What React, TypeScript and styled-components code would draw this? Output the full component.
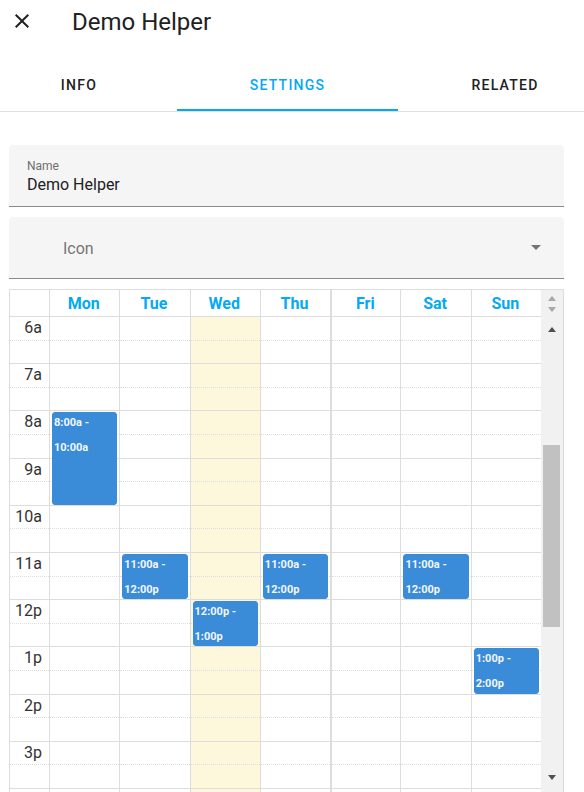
import React from 'react';
import styled, { createGlobalStyle } from 'styled-components';

const GlobalStyle = createGlobalStyle`
  body {
    margin: 0;
    font-family: Roboto, 'Noto Sans', sans-serif;
    background: #fff;
    overflow: hidden;
  }
`;

const SLOT = 23.6;
const HOUR = SLOT * 2;

const Page = styled.div`
  width: 584px;
  height: 792px;
  overflow: hidden;
`;

const Header = styled.div`
  height: 44px;
  display: flex;
  align-items: center;
  padding-left: 10px;
  gap: 38px;

  h2 {
    margin: 0;
    font-size: 24px;
    font-weight: 400;
    color: #212121;
    line-height: 1;
  }
`;

const CloseButton = styled.button`
  width: 24px;
  height: 24px;
  padding: 0;
  border: none;
  background: none;
  display: flex;
  margin-top: -2px;
  color: #212121;
`;

const TabBar = styled.div`
  margin-top: 16px;
  display: flex;
  overflow: hidden;
  border-bottom: 1px solid #e0e0e0;
`;

const Tab = styled.div<{ $width: number; $active?: boolean; $shift?: number }>`
  flex: 0 0 ${(p) => p.$width}px;
  height: 51px;
  box-sizing: border-box;
  padding: 0 ${(p) => p.$shift ?? 0}px 0 0;
  display: flex;
  align-items: center;
  justify-content: center;
  font-size: 14px;
  font-weight: 500;
  letter-spacing: 1.25px;
  text-transform: uppercase;
  color: ${(p) => (p.$active ? '#03a9f4' : '#212121')};
  border-bottom: 2px solid ${(p) => (p.$active ? '#03a9f4' : 'transparent')};
`;

const Content = styled.div`
  padding: 33px 20px 0 9px;
  display: flex;
  flex-direction: column;
  gap: 10px;
`;

const Field = styled.div`
  height: 62px;
  box-sizing: border-box;
  background: #f5f5f5;
  border-radius: 4px 4px 0 0;
  border-bottom: 1px solid #8a8a8a;
  display: flex;
  flex-direction: column;
  justify-content: center;
  padding: 0 18px;
`;

const FieldLabel = styled.span`
  font-size: 12px;
  color: #6f6f6f;
  line-height: 14px;
  margin-top: 2px;
`;

const FieldValue = styled.span`
  font-size: 16px;
  color: #212121;
  line-height: 20px;
  margin-top: 2px;
`;

const SelectField = styled(Field)`
  flex-direction: row;
  align-items: center;
  justify-content: space-between;
  padding: 0 23px 0 54px;
`;

const Placeholder = styled.span`
  font-size: 16px;
  color: #757575;
  margin-top: 1px;
`;

const Caret = styled.span`
  width: 0;
  height: 0;
  border-left: 5px solid transparent;
  border-right: 5px solid transparent;
  border-top: 5px solid #757575;
`;

const Calendar = styled.div`
  border: 1px solid #ddd;
  border-bottom: none;
  height: 503px;
  display: flex;
  flex-direction: column;
`;

const Columns = `
  display: grid;
  grid-template-columns: 39px repeat(7, 1fr) 22px;
`;

const HeadRow = styled.div`
  ${Columns};
  height: 27px;
`;

const HeadCell = styled.div<{ $thick?: boolean }>`
  border-left: ${(p) => (p.$thick ? 2 : 1)}px solid #ddd;
  border-bottom: 1px solid #ddd;
  display: flex;
  align-items: center;
  justify-content: center;
  padding-right: 2px;
  font-size: 16px;
  font-weight: 700;
  color: #03a9f4;
`;

const AxisHead = styled.div`
  border-bottom: 1px solid #ddd;
`;

const Body = styled.div`
  ${Columns};
  flex: 1;
  overflow: hidden;
`;

const Column = styled.div<{ $thick?: boolean; $today?: boolean }>`
  position: relative;
  border-left: ${(p) => (p.$thick ? 2 : 1)}px solid #ddd;
  background: ${(p) => (p.$today ? '#fdf8dc' : 'transparent')};
`;

const AxisColumn = styled.div`
  position: relative;
`;

const Slot = styled.div<{ $minor: boolean }>`
  height: ${SLOT}px;
  box-sizing: border-box;
  border-bottom: 1px ${(p) => (p.$minor ? 'dotted' : 'solid')} #ddd;
`;

const TimeLabel = styled.div`
  height: ${SLOT}px;
  box-sizing: border-box;
  border-bottom: 1px dotted #ddd;
  text-align: right;
  padding: 1px 7px 0 0;
  font-size: 16px;
  line-height: 19px;
  color: #333;
`;

const Event = styled.div`
  position: absolute;
  left: 2px;
  right: 2px;
  background: #3a8bd8;
  border: 1px solid #3a8bd8;
  border-radius: 3px;
  box-sizing: border-box;
  padding: 0 1px;
  overflow: hidden;
  color: #f3f7fd;
  font-size: 11px;
  font-weight: 700;
  line-height: 25px;

  span {
    display: block;
    margin-top: -3px;
  }
`;

const ScrollTrack = styled.div<{ $head?: boolean }>`
  background: #f1f1f1;
  display: flex;
  flex-direction: column;
  align-items: center;
  ${(p) => (p.$head ? 'justify-content: center; gap: 6px;' : '')}
`;

const Arrow = styled.span<{ $up?: boolean; $color: string; $gap?: number }>`
  width: 0;
  height: 0;
  margin-top: ${(p) => p.$gap ?? 0}px;
  border-left: 4px solid transparent;
  border-right: 4px solid transparent;
  ${(p) =>
    p.$up
      ? `border-bottom: 5px solid ${p.$color};`
      : `border-top: 5px solid ${p.$color};`}
`;

const Thumb = styled.div`
  width: 17px;
  height: 182px;
  margin-top: 113px;
  background: #c1c1c1;
`;

const DAYS = ['Mon', 'Tue', 'Wed', 'Thu', 'Fri', 'Sat', 'Sun'];
const HOURS = ['6a', '7a', '8a', '9a', '10a', '11a', '12p', '1p', '2p', '3p'];

type CalEvent = { day: number; start: number; end: number; from: string; to: string };

const EVENTS: CalEvent[] = [
  { day: 0, start: 8, end: 10, from: '8:00a', to: '10:00a' },
  { day: 1, start: 11, end: 12, from: '11:00a', to: '12:00p' },
  { day: 2, start: 12, end: 13, from: '12:00p', to: '1:00p' },
  { day: 3, start: 11, end: 12, from: '11:00a', to: '12:00p' },
  { day: 5, start: 11, end: 12, from: '11:00a', to: '12:00p' },
  { day: 6, start: 13, end: 14, from: '1:00p', to: '2:00p' },
];

function Slots() {
  return (
    <>
      {HOURS.map((h) => (
        <React.Fragment key={h}>
          <Slot $minor />
          <Slot $minor={false} />
        </React.Fragment>
      ))}
    </>
  );
}

export default function App() {
  return (
    <Page>
      <GlobalStyle />
      <Header>
        <CloseButton aria-label="Close">
          <svg width="24" height="24" viewBox="0 0 24 24">
            <path
              fill="currentColor"
              d="M19 6.41L17.59 5 12 10.59 6.41 5 5 6.41 10.59 12 5 17.59 6.41 19 12 13.41 17.59 19 19 17.59 13.41 12z"
            />
          </svg>
        </CloseButton>
        <h2>Demo Helper</h2>
      </Header>

      <TabBar>
        <Tab $width={177} $shift={19}>Info</Tab>
        <Tab $width={221} $active>Settings</Tab>
        <Tab $width={214}>Related</Tab>
      </TabBar>

      <Content>
        <Field>
          <FieldLabel>Name</FieldLabel>
          <FieldValue>Demo Helper</FieldValue>
        </Field>
        <SelectField>
          <Placeholder>Icon</Placeholder>
          <Caret />
        </SelectField>

        <Calendar>
          <HeadRow>
            <AxisHead />
            {DAYS.map((d) => (
              <HeadCell key={d} $thick={d === 'Fri'}>
                {d}
              </HeadCell>
            ))}
            <ScrollTrack $head>
              <Arrow $up $color="#a8a8a8" />
              <Arrow $color="#a8a8a8" />
            </ScrollTrack>
          </HeadRow>

          <Body>
            <AxisColumn>
              {HOURS.map((h) => (
                <React.Fragment key={h}>
                  <TimeLabel>{h}</TimeLabel>
                  <Slot $minor={false} />
                </React.Fragment>
              ))}
            </AxisColumn>
            {DAYS.map((d, i) => (
              <Column key={d} $thick={d === 'Fri'} $today={d === 'Wed'}>
                <Slots />
                {EVENTS.filter((e) => e.day === i).map((e) => (
                  <Event
                    key={e.from}
                    style={{
                      top: (e.start - 6) * HOUR + 1,
                      height: (e.end - e.start) * HOUR - 2,
                    }}
                  >
                    <span>
                      {e.from} - {e.to}
                    </span>
                  </Event>
                ))}
              </Column>
            ))}
            <ScrollTrack>
              <Arrow $up $color="#505050" $gap={10} />
              <Thumb />
              <Arrow $color="#505050" $gap={148} />
            </ScrollTrack>
          </Body>
        </Calendar>
      </Content>
    </Page>
  );
}
